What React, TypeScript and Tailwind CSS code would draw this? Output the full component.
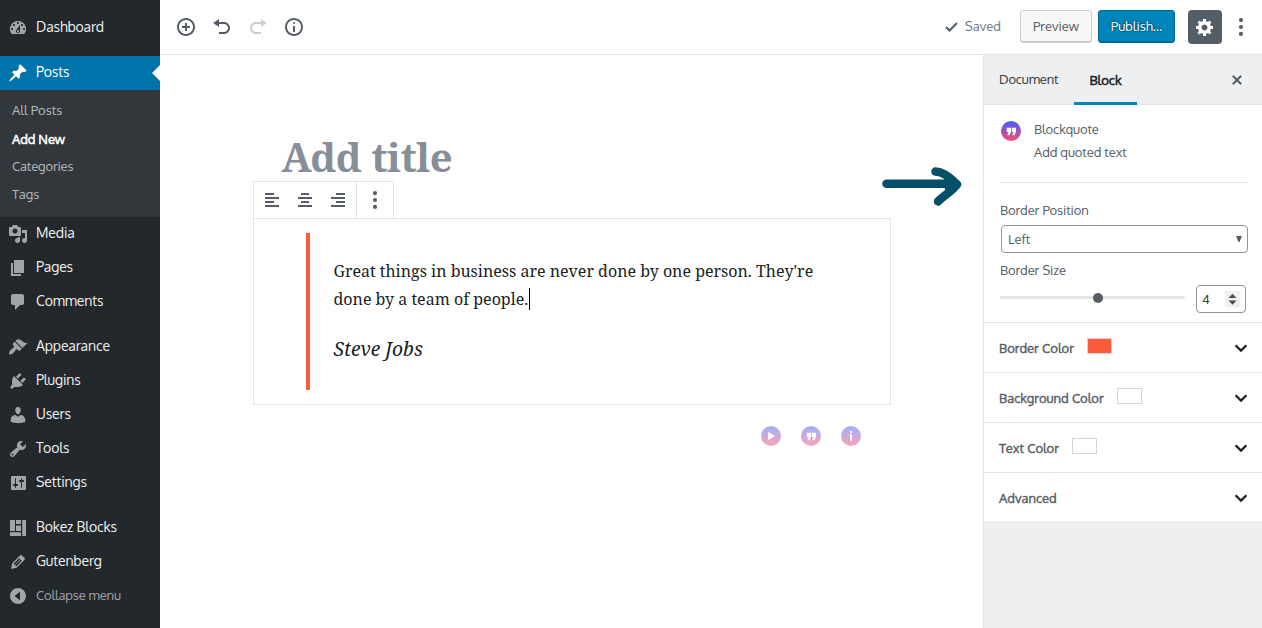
import type { ReactNode } from "react";

const icons = {
  dashboard:
    "M3.76 16h12.48A7.998 7.998 0 0 0 10 3a7.998 7.998 0 0 0-6.24 13zM10 4c.55 0 1 .45 1 1s-.45 1-1 1-1-.45-1-1 .45-1 1-1zM6 6c.55 0 1 .45 1 1s-.45 1-1 1-1-.45-1-1 .45-1 1-1zm8 0c.55 0 1 .45 1 1s-.45 1-1 1-1-.45-1-1 .45-1 1-1zm-5.37 5.55L12 7v6c0 1.1-.9 2-2 2s-2-.9-2-2c0-.57.24-1.08.63-1.45zM4 10c.55 0 1 .45 1 1s-.45 1-1 1-1-.45-1-1 .45-1 1-1zm12 0c.55 0 1 .45 1 1s-.45 1-1 1-1-.45-1-1 .45-1 1-1zm-5 3c0-.55-.45-1-1-1s-1 .45-1 1 .45 1 1 1 1-.45 1-1z",
  post: "M10.44 3.02l1.82-1.82 6.36 6.35-1.83 1.82c-1.05-.68-2.48-.57-3.41.36l-.75.75c-.92.93-1.04 2.35-.35 3.41l-1.83 1.82-2.41-2.41-2.8 2.79c-.42.42-3.38 2.71-3.8 2.29s1.86-3.39 2.28-3.81l2.79-2.79L4.1 9.36l1.83-1.82c1.05.69 2.48.57 3.4-.36l.75-.75c.93-.92 1.05-2.35.36-3.41z",
  media:
    "M13 11V4c0-.55-.45-1-1-1h-1.67L9 1H5L3.67 3H2c-.55 0-1 .45-1 1v7c0 .55.45 1 1 1h10c.55 0 1-.45 1-1zM7 4.5c1.38 0 2.5 1.12 2.5 2.5S8.38 9.5 7 9.5 4.5 8.38 4.5 7 5.62 4.5 7 4.5zM14 6h5v10.5c0 1.38-1.12 2.5-2.5 2.5S14 17.88 14 16.5s1.12-2.5 2.5-2.5c.17 0 .34.02.5.05V9h-3V6zm-4 8.05V13h2v3.5c0 1.38-1.12 2.5-2.5 2.5S7 17.88 7 16.5 8.12 14 9.5 14c.17 0 .34.02.5.05z",
  page: "M6 15V2h10v13H6zm-1 1h8v2H3V5h2v11z",
  comments: "M5 2h9c1.1 0 2 .9 2 2v7c0 1.1-.9 2-2 2h-2l-5 5v-5H5c-1.1 0-2-.9-2-2V4c0-1.1.9-2 2-2z",
  appearance:
    "M14.48 11.06L7.41 3.99l1.5-1.5c.5-.56 2.3-.47 3.51.32 1.21.8 1.43 1.28 2.91 2.1 1.18.64 2.45 1.26 4.45.85zm-.71.71L6.7 4.7 4.93 6.47c-.39.39-.39 1.02 0 1.41l1.06 1.06c.39.39.39 1.03 0 1.42-.6.6-1.43 1.11-2.21 1.69-.35.26-.7.53-1.01.84C1.43 14.23.4 16.08 1.4 17.07c.99 1 2.84-.03 4.18-1.36.31-.31.58-.66.85-1.02.57-.78 1.08-1.61 1.69-2.21.39-.39 1.02-.39 1.41 0l1.06 1.06c.39.39 1.02.39 1.41 0z",
  plugins:
    "M13.11 4.36L9.87 7.6 8 5.73l3.24-3.24c.35-.34 1.05-.2 1.56.32.52.51.66 1.21.31 1.55zm-8 1.77l.91-1.12 9.01 9.01-1.19.84c-.71.71-2.63 1.16-3.82 1.16H6.14L4.9 17.26c-.59.59-1.54.59-2.12 0-.59-.58-.59-1.53 0-2.12l1.24-1.24v-3.88c0-1.13.4-3.19 1.09-3.89zm7.26 3.97l3.24-3.24c.34-.35 1.04-.21 1.55.31.52.51.66 1.21.31 1.55l-3.24 3.25z",
  users:
    "M10 9.25c-2.27 0-2.73-3.44-2.73-3.44C7 4.02 7.82 2 9.97 2c2.16 0 2.98 2.02 2.71 3.81 0 0-.41 3.44-2.68 3.44zm0 2.57L12.72 10c2.39 0 4.52 2.33 4.52 4.53v2.49s-3.65 1.13-7.24 1.13c-3.65 0-7.24-1.13-7.24-1.13v-2.49c0-2.25 1.94-4.48 4.47-4.48z",
  tools:
    "M16.68 9.77c-1.34 1.34-3.3 1.67-4.95.99l-5.41 6.52c-.99.99-2.59.99-3.58 0s-.99-2.59 0-3.57l6.52-5.42c-.68-1.65-.35-3.61.99-4.95 1.28-1.28 3.12-1.62 4.72-1.06l-2.89 2.89 2.82 2.82 2.86-2.87c.53 1.58.18 3.39-1.08 4.65zM3.81 16.21c.4.39 1.04.39 1.43 0 .4-.4.4-1.04 0-1.43-.39-.4-1.03-.4-1.43 0-.39.39-.39 1.03 0 1.43z",
  settings:
    "M18 16V4c0-.55-.45-1-1-1H4c-.55 0-1 .45-1 1v12c0 .55.45 1 1 1h13c.55 0 1-.45 1-1zM8 11h1c.55 0 1 .45 1 1s-.45 1-1 1H8v1.5c0 .28-.22.5-.5.5s-.5-.22-.5-.5V13H6c-.55 0-1-.45-1-1s.45-1 1-1h1V5.5c0-.28.22-.5.5-.5s.5.22.5.5V11zm5-2h-1c-.55 0-1-.45-1-1s.45-1 1-1h1V5.5c0-.28.22-.5.5-.5s.5.22.5.5V7h1c.55 0 1 .45 1 1s-.45 1-1 1h-1v5.5c0 .28-.22.5-.5.5s-.5-.22-.5-.5V9z",
  layout: "M2 2h5v11H2zM8 2h5v4H8zM8 7.500h5V13H8zM14.200 2H18v16h-3.800zM2 14.200h11V18H2z",
  edit: "M13.89 3.39l2.71 2.72c.46.46.42 1.24.03 1.64l-8.01 8.02-5.56 1.16 1.16-5.58s7.6-7.63 7.99-8.03c.39-.39 1.22-.39 1.68.07zm-2.73 2.79l-5.59 5.61 1.11 1.11 5.54-5.65zm-2.97 8.23l5.58-5.6-1.07-1.08-5.59 5.6z",
  collapse: "M10 2a8 8 0 1 0 0 16 8 8 0 0 0 0-16zM12 5.800v8.400L6.500 10z",
  insert:
    "M10 1c-5 0-9 4-9 9s4 9 9 9 9-4 9-9-4-9-9-9zm0 16c-3.9 0-7-3.1-7-7s3.1-7 7-7 7 3.1 7 7-3.1 7-7 7zm1-11H9v3H6v2h3v3h2v-3h3V9h-3V6z",
  undo: "M12 5H7V2L1 6l6 4V7h5c2.2 0 4 1.8 4 4s-1.8 4-4 4H7v2h5c3.3 0 6-2.7 6-6s-2.7-6-6-6z",
  redo: "M8 5h5V2l6 4-6 4V7H8c-2.2 0-4 1.8-4 4s1.8 4 4 4h5v2H8c-3.3 0-6-2.7-6-6s2.7-6 6-6z",
  info: "M9 15h2V9H9v6zm1-10c-.5 0-1 .5-1 1s.5 1 1 1 1-.5 1-1-.5-1-1-1zm0-4c-5 0-9 4-9 9s4 9 9 9 9-4 9-9-4-9-9-9zm0 16c-3.9 0-7-3.1-7-7s3.1-7 7-7 7 3.1 7 7-3.1 7-7 7z",
  saved: "M15.3 5.3l-6.8 6.8-2.8-2.8-1.4 1.4 4.2 4.2 8.2-8.2",
  generic:
    "M18 12h-2.18c-.17.7-.44 1.35-.81 1.93l1.54 1.54-2.1 2.1-1.54-1.54c-.58.36-1.23.63-1.91.79V19H8v-2.18c-.68-.16-1.33-.43-1.91-.79l-1.54 1.54-2.12-2.12 1.54-1.54c-.36-.58-.63-1.23-.79-1.91H1V9.03h2.17c.16-.7.44-1.35.8-1.94L2.43 5.55l2.1-2.1 1.54 1.54c.58-.37 1.24-.64 1.93-.81V2h3v2.18c.68.16 1.33.43 1.91.79l1.54-1.54 2.12 2.12-1.54 1.54c.36.59.64 1.24.8 1.94H18V12zm-8.5 1.5c1.66 0 3-1.34 3-3s-1.34-3-3-3-3 1.34-3 3 1.34 3 3 3z",
  ellipsis:
    "M10 5.200a2.100 2.100 0 1 0 0-4.200 2.100 2.100 0 0 0 0 4.200zM10 12.100a2.100 2.100 0 1 0 0-4.200 2.100 2.100 0 0 0 0 4.200zM10 19a2.100 2.100 0 1 0 0-4.200 2.100 2.100 0 0 0 0 4.200z",
  close:
    "M14.95 6.46L11.41 10l3.54 3.54-1.41 1.41L10 11.42l-3.53 3.53-1.42-1.42L8.58 10 5.05 6.47l1.42-1.42L10 8.58l3.54-3.53z",
  alignLeft: "M12 5V3H3v2h9zm5 4V7H3v2h14zm-5 4v-2H3v2h9zm5 4v-2H3v2h14z",
  alignCenter: "M14 5V3H6v2h8zm3 4V7H3v2h14zm-3 4v-2H6v2h8zm3 4v-2H3v2h14z",
  alignRight: "M17 5V3H8v2h9zm0 4V7H3v2h14zm0 4v-2H8v2h9zm0 4v-2H3v2h14z",
};

type IconName = keyof typeof icons;

function Icon({ name, className = "" }: { name: IconName; className?: string }) {
  return (
    <svg viewBox="0 0 20 20" className={`size-5 shrink-0 ${className}`} fill="currentColor" fillRule="evenodd">
      <path d={icons[name]} />
    </svg>
  );
}

const glyphs = {
  play: "M7.200 6v8l7-4z",
  quote:
    "M5.800 6.800h4.200v4.200l-1.600 3.200H6.200l1.500-3.200H5.800zM10.800 6.800H15v4.200l-1.600 3.200h-2.200l1.500-3.200h-1.900z",
  info: "M9.100 5h2v2h-2zM8.600 8.300h2.500V14.800h-2V9.500h-.5z",
};

function BlockBadge({ glyph, className = "" }: { glyph: keyof typeof glyphs; className?: string }) {
  return (
    <svg viewBox="0 0 20 20" className={`size-5 shrink-0 ${className}`}>
      <defs>
        <linearGradient id={`badge-${glyph}`} x1="0" y1="0" x2="0" y2="1">
          <stop offset="0" stopColor="#4260fc" />
          <stop offset="1" stopColor="#fb4a70" />
        </linearGradient>
      </defs>
      <circle cx="10" cy="10" r="10" fill={`url(#badge-${glyph})`} />
      <path d={glyphs[glyph]} fill="#fff" />
    </svg>
  );
}

function MenuItem({ icon, children }: { icon: IconName; children: ReactNode }) {
  return (
    <div className="flex h-[34px] items-center px-2 text-[#eee]">
      <Icon name={icon} className="text-[#a0a5aa]" />
      <span className="ml-2 -mt-0.5 text-sm tracking-[-0.12px]">{children}</span>
    </div>
  );
}

function Sidebar() {
  return (
    <nav className="flex w-40 shrink-0 flex-col bg-[#23282d] pt-[11px]">
      <MenuItem icon="dashboard">Dashboard</MenuItem>
      <div className="relative mt-[11px] flex h-[34px] items-center bg-[#0073aa] px-2 text-white">
        <Icon name="post" />
        <span className="ml-2 -mt-0.5 text-sm tracking-[-0.12px]">Posts</span>
        <svg viewBox="0 0 8 16" className="absolute top-[9px] right-0 h-4 w-2" fill="#fff">
          <path d="M8 0v16L0 8z" />
        </svg>
      </div>
      <div className="flex h-[127px] flex-col bg-[#32373c] pt-1.5 pl-3 text-[13px] leading-7 text-[#b4b9be]">
        <span>All Posts</span>
        <span className="mt-px -mb-px tracking-[-0.1px] text-white [-webkit-text-stroke:0.5px]">Add New</span>
        <span className="tracking-[-0.15px]">Categories</span>
        <span>Tags</span>
      </div>
      <MenuItem icon="media">Media</MenuItem>
      <MenuItem icon="page">Pages</MenuItem>
      <MenuItem icon="comments">Comments</MenuItem>
      <div className="h-[11px]" />
      <MenuItem icon="appearance">Appearance</MenuItem>
      <MenuItem icon="plugins">Plugins</MenuItem>
      <MenuItem icon="users">Users</MenuItem>
      <MenuItem icon="tools">Tools</MenuItem>
      <MenuItem icon="settings">Settings</MenuItem>
      <div className="h-[11px]" />
      <MenuItem icon="layout">Bokez Blocks</MenuItem>
      <MenuItem icon="edit">Gutenberg</MenuItem>
      <div className="flex h-[34px] items-center px-2 text-[13px] text-[#a0a5aa]">
        <Icon name="collapse" />
        <span className="ml-2 -mt-px tracking-[-0.15px]">Collapse menu</span>
      </div>
    </nav>
  );
}

function Header() {
  return (
    <header className="flex h-[55px] shrink-0 items-center border-b border-[#e2e4e7] pl-4 text-[13px] text-[#555d66]">
      <div className="flex gap-4">
        <Icon name="insert" />
        <Icon name="undo" />
        <Icon name="redo" className="text-[#ccced1]" />
        <Icon name="info" />
      </div>
      <div className="ml-auto flex items-center">
        <Icon name="saved" />
        <span className="ml-1 text-[#6c7781]">Saved</span>
        <button className="-mt-px ml-[19px] h-[33px] w-[72px] rounded-[3px] border border-[#ccc] bg-[#f7f7f7] pt-px shadow-[inset_0_-1px_0_#ccc]">
          Preview
        </button>
        <button className="-mt-px ml-1.5 h-[33px] w-[77px] rounded-[3px] border border-[#006a95] bg-[#0085ba] pt-px text-white shadow-[inset_0_-1px_0_#006a95] [text-shadow:0_-1px_1px_#005d82,1px_0_1px_#005d82,0_1px_1px_#005d82,-1px_0_1px_#005d82]">
          Publish…
        </button>
        <button className="ml-[13px] flex size-[34px] items-center justify-center rounded-[4px] bg-[#555d66] text-white">
          <Icon name="generic" />
        </button>
        <Icon name="ellipsis" className="mr-[11px] ml-[9px]" />
      </div>
    </header>
  );
}

function Editor() {
  return (
    <main className="relative flex min-w-0 flex-1 flex-col pt-[74px] pl-[93px] font-['Noto_Serif',serif] text-[#191e23]">
      <h1 className="ml-[28.5px] h-[52px] text-[40px] leading-[56px] font-bold tracking-[-0.5px] text-[#868e98]">Add title</h1>
      <div className="z-10 flex h-[38px] w-[141px] border border-[#e2e4e7] bg-white text-[#555d66]">
        <div className="flex items-center gap-[13px] pl-2">
          <Icon name="alignLeft" />
          <Icon name="alignCenter" />
          <Icon name="alignRight" />
        </div>
        <div className="ml-2 flex flex-1 items-center justify-center border-l border-[#e2e4e7]">
          <Icon name="ellipsis" />
        </div>
      </div>
      <section className="-mt-px h-[187px] w-[638px] border border-[#e2e4e7] pt-3.5 pl-[52px]">
        <blockquote className="h-[157px] w-[540px] border-l-4 border-[#fa5b3d] pt-6 pl-[23.5px]">
          <p className="text-base leading-7">
            Great things in business are never done by one person. They're
            <br />
            done by a team of people.
            <span className="ml-[0.5px] inline-block h-[22px] w-px bg-black align-[-5px]" />
          </p>
          <cite className="mt-5 block text-[19.2px] leading-8">Steve Jobs</cite>
        </blockquote>
      </section>
      <div className="mt-[21px] flex gap-5 pl-[508px] opacity-50">
        <BlockBadge glyph="play" />
        <BlockBadge glyph="quote" />
        <BlockBadge glyph="info" />
      </div>
      <svg viewBox="0 0 84 44" className="absolute top-[110px] left-[720px] h-11 w-[84px]" fill="none" stroke="#054f68" strokeLinecap="round" strokeLinejoin="round">
        <path d="M6.500 18.800H74" strokeWidth="8.500" />
        <path d="M55.500 6.500c7 .2 14 5 21.500 13C71.500 27 64 30 58 36.500" strokeWidth="8.500" />
        <path d="M66 13l9 6.500-8 6z" strokeWidth="4" fill="#054f68" />
      </svg>
    </main>
  );
}

function PanelRow({ label, swatch }: { label: string; swatch?: string }) {
  return (
    <div className="flex h-[50px] items-center border-t border-[#e2e4e7] pr-[11px] pl-[15px]">
      <span className="mt-[3px] [-webkit-text-stroke:0.4px]">{label}</span>
      {swatch && <span className={`-mt-1 ml-[13.3px] h-4 w-[25px] border border-[#d5d5d5] ${swatch}`} />}
      <svg viewBox="0 0 20 20" className="mt-px ml-auto size-5" fill="none" stroke="#191e23" strokeWidth="2.200">
        <path d="M4.600 7.200L10 12.600l5.400-5.400" />
      </svg>
    </div>
  );
}

function Inspector() {
  return (
    <aside className="flex w-[279px] shrink-0 flex-col border-l border-[#e2e4e7] bg-[#edeff0] text-[13px] text-[#555d66]">
      <div className="flex h-[50px] shrink-0 border-b border-[#e2e4e7] text-[#191e23]">
        <div className="w-[90px] pl-[15px] leading-[49px] tracking-[-0.15px] text-[#32373c]">Document</div>
        <div className="h-[50px] w-[63px] border-b-[3px] border-[#0085ba] text-center leading-[50px] [-webkit-text-stroke:0.5px]">Block</div>
        <Icon name="close" className="mt-[15px] mr-[15px] ml-auto text-[#555d66]" />
      </div>
      <div className="bg-white">
        <div className="mr-[15px] ml-4 flex h-[78px] border-b border-[#e2e4e7] pt-4 pl-px">
          <BlockBadge glyph="quote" />
          <div className="-mt-[3px] ml-[13px] leading-[23px] tracking-[-0.1px]">
            <div>Blockquote</div>
            <div>Add quoted text</div>
          </div>
        </div>
        <div className="h-[139px] px-4 pt-[17px]">
          <div className="leading-5 tracking-[-0.1px]">Border Position</div>
          <div className="mt-[5px] ml-px flex h-7 w-[247px] items-center rounded-[4px] border border-[#8d96a0] pr-[5px] pl-1.5">
            <span className="mt-0.5">Left</span>
            <svg viewBox="0 0 6 6" className="ml-auto size-1.5" fill="#555d66">
              <path d="M0 0h6L3.500 6h-1z" />
            </svg>
          </div>
          <div className="mt-[7px] leading-5 tracking-[-0.1px]">Border Size</div>
          <div className="mt-[5px] flex h-7 items-center">
            <div className="-mt-[3px] flex h-[3px] w-[185px] items-center rounded-full bg-[#e2e4e7] pl-[93px]">
              <span className="size-2.5 rounded-full bg-[#555d66]" />
            </div>
            <div className="ml-[11px] flex h-7 w-[50px] items-center justify-between rounded-[4px] border border-[#8d96a0] pr-[5px] pl-[5px] text-[#32373c]">
              <span className="mt-px">4</span>
              <svg viewBox="0 0 15 16" className="h-4 w-[15px] bg-[#f0f0f0]" fill="#4d4d4d">
                <path d="M3.500 7L7.500 2.700 11.500 7zM3.500 9.500h8L7.500 13.800z" />
              </svg>
            </div>
          </div>
        </div>
        <PanelRow label="Border Color" swatch="bg-[#fa5b3d]" />
        <PanelRow label="Background Color" swatch="bg-white" />
        <PanelRow label="Text Color" swatch="bg-white" />
        <PanelRow label="Advanced" />
        <div className="h-px bg-[#e2e4e7]" />
      </div>
    </aside>
  );
}

export default function App() {
  return (
    <div className="flex h-[628px] w-[1262px] overflow-hidden bg-white font-['Oxygen','Noto_Sans',sans-serif]">
      <Sidebar />
      <div className="flex min-w-0 flex-1 flex-col">
        <Header />
        <div className="flex min-h-0 flex-1">
          <Editor />
          <Inspector />
        </div>
      </div>
    </div>
  );
}
